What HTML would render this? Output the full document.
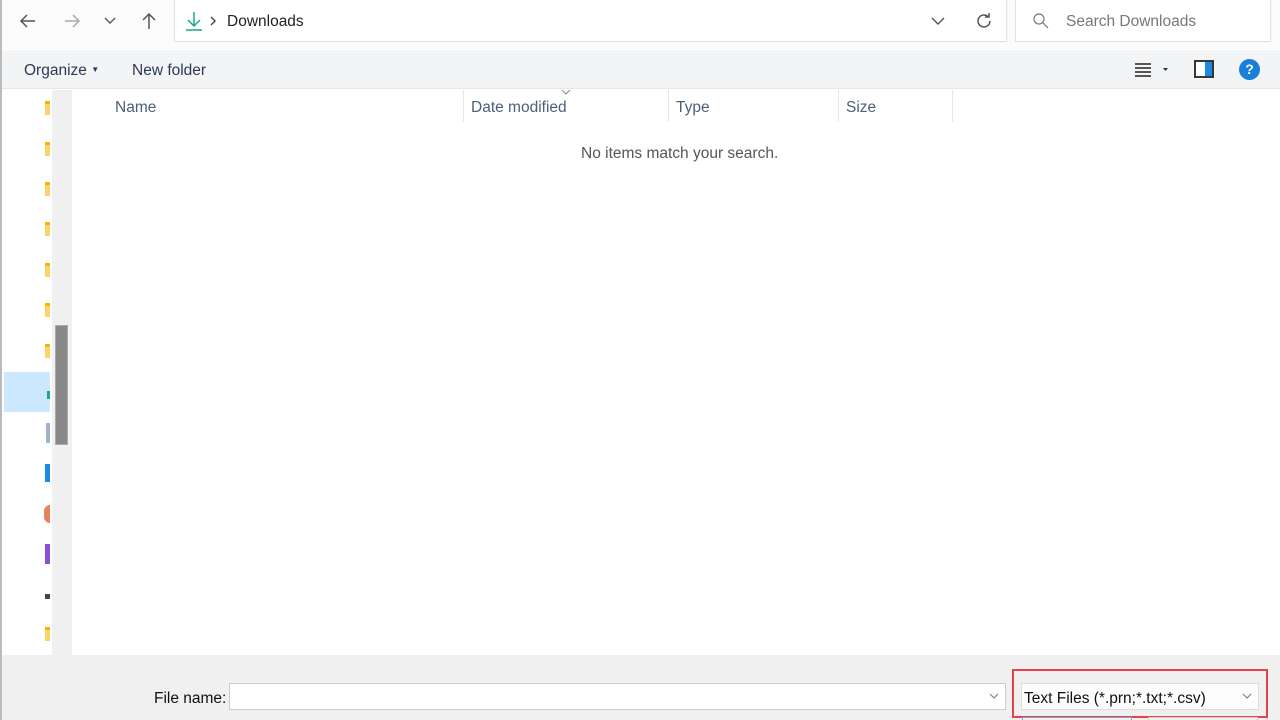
<!DOCTYPE html>
<html><head><style>
*{margin:0;padding:0;box-sizing:border-box}
body{width:1280px;height:720px;overflow:hidden;background:#fff;font-family:"Segoe UI","Liberation Sans",sans-serif;position:relative;color:#1a1a1a}
.a{position:absolute}
</style></head><body>
<div class="a" style="left:0;top:0;width:2px;height:720px;background:#bbb"></div>
<div class="a" style="left:2px;top:0;width:1278px;height:49px;background:#fbfbfb"></div>
<svg class="a" style="left:18px;top:11px" width="20" height="20" viewBox="0 0 20 20"><path d="M17 10H3M9 4L3 10l6 6" stroke="#555" stroke-width="1.5" fill="none"/></svg>
<svg class="a" style="left:62px;top:11px" width="20" height="20" viewBox="0 0 20 20"><path d="M3 10h14M11 4l6 6-6 6" stroke="#aaa" stroke-width="1.5" fill="none"/></svg>
<svg class="a" style="left:103px;top:15px" width="14" height="12" viewBox="0 0 14 12"><path d="M2 3l5 5 5-5" stroke="#555" stroke-width="1.4" fill="none"/></svg>
<svg class="a" style="left:139px;top:11px" width="20" height="20" viewBox="0 0 20 20"><path d="M10 18V3M4 9l6-6 6 6" stroke="#555" stroke-width="1.5" fill="none"/></svg>
<div class="a" style="left:174px;top:-1px;width:833px;height:43px;background:#fff;border:1px solid #e0e0e0"></div>
<svg class="a" style="left:184px;top:10px" width="20" height="22" viewBox="0 0 20 22"><path d="M10 2v14M4 10l6 6 6-6M2 20h16" stroke="#1aa88a" stroke-width="1.5" fill="none"/></svg>
<svg class="a" style="left:209px;top:16px" width="8" height="10" viewBox="0 0 8 10"><path d="M2 1l4 4-4 4" stroke="#444" stroke-width="1.4" fill="none"/></svg>
<div class="a" style="left:227px;top:13px;font-size:15.5px;color:#222">Downloads</div>
<svg class="a" style="left:930px;top:15px" width="16" height="12" viewBox="0 0 16 12"><path d="M2 3l6 6 6-6" stroke="#555" stroke-width="1.4" fill="none"/></svg>
<svg class="a" style="left:974px;top:11px" width="20" height="20" viewBox="0 0 20 20"><path d="M16 10a6 6 0 1 1-2-4.5M15 2v4h-4" stroke="#555" stroke-width="1.5" fill="none"/></svg>
<div class="a" style="left:1015px;top:-1px;width:256px;height:43px;background:#fff;border:1px solid #e0e0e0"></div>
<svg class="a" style="left:1032px;top:12px" width="18" height="18" viewBox="0 0 18 18"><circle cx="7" cy="7" r="5" stroke="#777" stroke-width="1.2" fill="none"/><path d="M11 11l5 5" stroke="#777" stroke-width="1.2"/></svg>
<div class="a" style="left:1066px;top:13px;font-size:15.5px;color:#777">Search Downloads</div>
<div class="a" style="left:2px;top:50px;width:1278px;height:39px;background:#f3f4f6;border-bottom:1px solid #e6e6e6"></div>
<div class="a" style="left:24px;top:62px;font-size:15.5px;color:#2b3a55">Organize <span style="font-size:8px;vertical-align:3px">▼</span></div>
<div class="a" style="left:132px;top:62px;font-size:15.5px;color:#2b3a55">New folder</div>
<svg class="a" style="left:1134px;top:62px" width="36" height="16" viewBox="0 0 36 16"><path d="M1 2h16M1 6h16M1 10h16M1 14h16" stroke="#222" stroke-width="1.4"/><path d="M29 6h5l-2.5 3z" fill="#333"/></svg>
<svg class="a" style="left:1194px;top:60px" width="20" height="18" viewBox="0 0 20 18"><rect x="1" y="1" width="18" height="16" fill="#fff" stroke="#222" stroke-width="1.8"/><rect x="11" y="2" width="7" height="14" fill="#1e88e5"/></svg>
<div class="a" style="left:1239px;top:59px;width:21px;height:21px;border-radius:50%;background:#1a7fd8;color:#fff;font-size:14px;font-weight:bold;text-align:center;line-height:21px">?</div>
<div class="a" style="left:52px;top:90px;width:20px;height:565px;background:#f0f0f0"></div>
<div class="a" style="left:55px;top:325px;width:13px;height:120px;background:#888;border:1px solid #aaa"></div>
<div class="a" style="left:4px;top:372px;width:46px;height:40px;background:#cce8ff"></div>
<div class="a" style="left:45px;top:101px;width:5px;height:14px;background:#fcd36a;border-top:3px solid #f5b400"></div>
<div class="a" style="left:45px;top:142px;width:5px;height:14px;background:#fcd36a;border-top:3px solid #f5b400"></div>
<div class="a" style="left:45px;top:182px;width:5px;height:14px;background:#fcd36a;border-top:3px solid #f5b400"></div>
<div class="a" style="left:45px;top:222px;width:5px;height:14px;background:#fcd36a;border-top:3px solid #f5b400"></div>
<div class="a" style="left:45px;top:263px;width:5px;height:14px;background:#fcd36a;border-top:3px solid #f5b400"></div>
<div class="a" style="left:45px;top:303px;width:5px;height:14px;background:#fcd36a;border-top:3px solid #f5b400"></div>
<div class="a" style="left:45px;top:344px;width:5px;height:14px;background:#fcd36a;border-top:3px solid #f5b400"></div>
<div class="a" style="left:47px;top:391px;width:3px;height:8px;background:#1aa88a"></div>
<div class="a" style="left:46px;top:423px;width:4px;height:20px;background:#9fb3cc"></div>
<div class="a" style="left:45px;top:464px;width:5px;height:18px;background:#1e88e5"></div>
<div class="a" style="left:44px;top:505px;width:6px;height:18px;background:#e8825c;border-radius:9px 0 0 9px"></div>
<div class="a" style="left:45px;top:544px;width:5px;height:20px;background:#8a4fd8"></div>
<div class="a" style="left:45px;top:594px;width:5px;height:5px;background:#444"></div>
<div class="a" style="left:45px;top:627px;width:5px;height:14px;background:#fcd36a;border-top:3px solid #f5b400"></div>
<div class="a" style="left:115px;top:99px;font-size:15.5px;color:#4c607a">Name</div>
<div class="a" style="left:463px;top:90px;width:1px;height:32px;background:#e5e5e5"></div>
<svg class="a" style="left:560px;top:89px" width="12" height="7" viewBox="0 0 12 7"><path d="M2 1l4 4 4-4" stroke="#888" stroke-width="1" fill="none"/></svg>
<div class="a" style="left:471px;top:99px;font-size:15.5px;color:#4c607a">Date modified</div>
<div class="a" style="left:668px;top:90px;width:1px;height:32px;background:#e5e5e5"></div>
<div class="a" style="left:676px;top:99px;font-size:15.5px;color:#4c607a">Type</div>
<div class="a" style="left:838px;top:90px;width:1px;height:32px;background:#e5e5e5"></div>
<div class="a" style="left:846px;top:99px;font-size:15.5px;color:#4c607a">Size</div>
<div class="a" style="left:952px;top:90px;width:1px;height:32px;background:#e5e5e5"></div>
<div class="a" style="left:581px;top:145px;font-size:15.5px;color:#555">No items match your search.</div>
<div class="a" style="left:2px;top:655px;width:1278px;height:65px;background:#f0f0f0"></div>
<div class="a" style="left:154px;top:690px;font-size:15.5px;color:#111">File name:</div>
<div class="a" style="left:229px;top:683px;width:777px;height:27px;background:#fff;border:1px solid #ccc"></div>
<svg class="a" style="left:988px;top:692px" width="12" height="8" viewBox="0 0 12 8"><path d="M2 2l4 4 4-4" stroke="#777" stroke-width="1" fill="none"/></svg>
<div class="a" style="left:1012px;top:669px;width:256px;height:49px;border:2px solid #e8414a"></div>
<div class="a" style="left:1021px;top:683px;width:238px;height:27px;background:#fdfdfd;border:1px solid #ddd"></div>
<div class="a" style="left:1024px;top:690px;font-size:15.5px;color:#111">Text Files (*.prn;*.txt;*.csv)</div>
<svg class="a" style="left:1241px;top:692px" width="12" height="8" viewBox="0 0 12 8"><path d="M2 2l4 4 4-4" stroke="#777" stroke-width="1" fill="none"/></svg>
<div class="a" style="left:1022px;top:717px;width:110px;height:3px;border:1px solid #7aa7d8;border-bottom:none"></div>
<div class="a" style="left:1148px;top:717px;width:110px;height:3px;border:1px solid #ccc;border-bottom:none"></div>
</body></html>
